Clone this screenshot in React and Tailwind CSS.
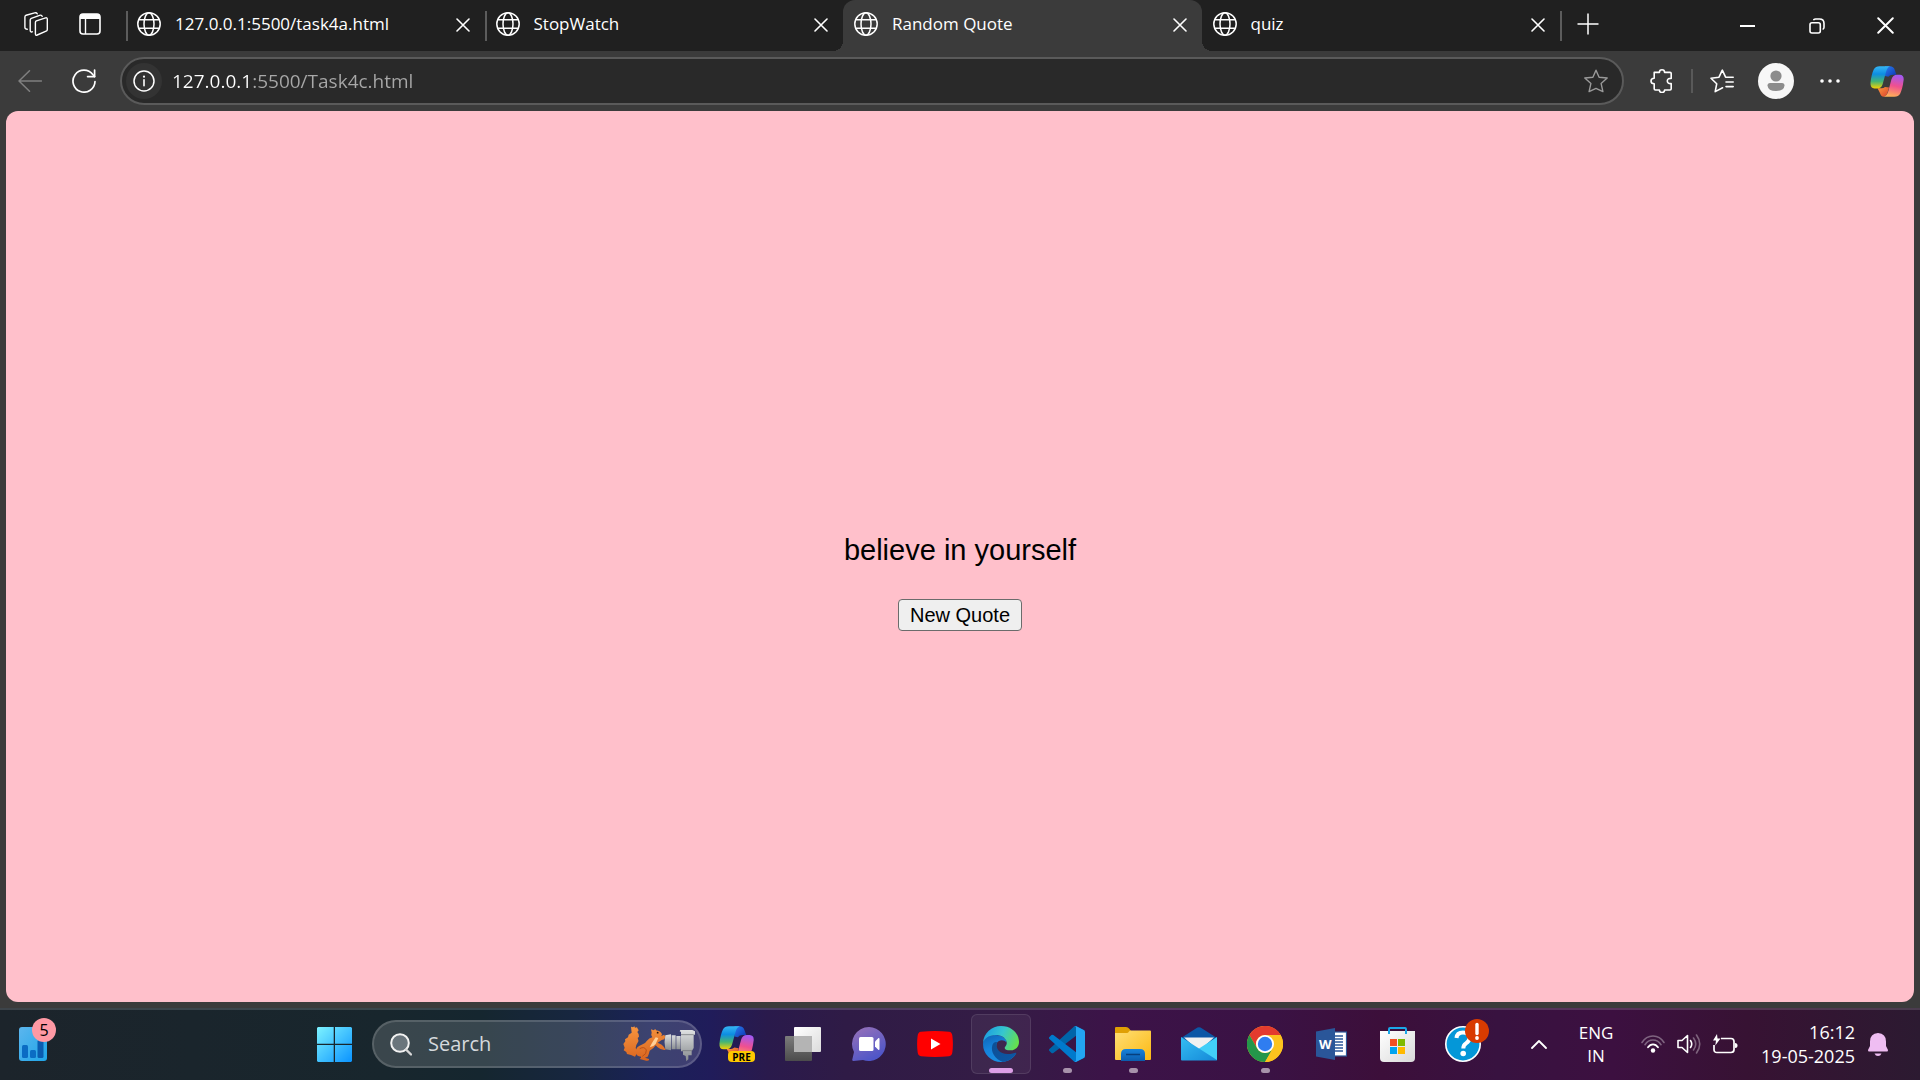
import { useState } from "react";

const QUOTES = ["believe in yourself", "never stop learning", "dream big, start small"];

const TABS = [
  { title: "127.0.0.1:5500/task4a.html", divider: true },
  { title: "StopWatch", divider: true },
  { title: "Random Quote", active: true },
  { title: "quiz" },
];

/* ---------- line icons ---------- */

function Line({ size = 24, w = 1.5, children, className }) {
  return (
    <svg
      width={size}
      height={size}
      viewBox="0 0 24 24"
      fill="none"
      stroke="currentColor"
      strokeWidth={w}
      strokeLinecap="round"
      strokeLinejoin="round"
      aria-hidden="true"
      className={className}
    >
      {children}
    </svg>
  );
}

const WorkspacesIcon = () => (
  <Line w={1.4}>
    <path d="M12.4 8.9 21.6 5.9Q23.3 5.5 23.3 7.2V17.4Q23.3 18.7 22.1 19.2L13.2 23Q11.4 23.7 11.4 21.8V10.4Q11.4 9.3 12.4 8.9Z" />
    <path d="M8.3 19.8Q6.2 20.4 6.2 18.3V8Q6.2 6.8 7.3 6.3L15.6 3.3Q17.7 2.7 18.2 4.4" />
    <path d="M3.3 17.2Q.9 17.2.9 15.4V5Q.9 3.7 2.1 3.2L10.6.9Q12.6.4 13.2 1.8" />
  </Line>
);

const TabActionsIcon = () => (
  <svg width="22" height="22" viewBox="0 0 22 22" fill="none" aria-hidden="true">
    <rect x="1" y="1" width="20" height="20" rx="3" stroke="#fff" strokeWidth="1.6" />
    <path d="M1 6V4a3 3 0 0 1 3-3h14a3 3 0 0 1 3 3v2Z" fill="#fff" />
    <path d="M6.5 6v15" stroke="#fff" strokeWidth="1.4" />
  </svg>
);

const GlobeIcon = () => (
  <Line w={1.5} className="shrink-0">
    <circle cx="12" cy="12" r="11.2" />
    <ellipse cx="12" cy="12" rx="5" ry="11.2" />
    <path d="M1.8 7.8h20.4M1.8 16.2h20.4" />
  </Line>
);

const CrossIcon = ({ size }) => (
  <svg width={size} height={size} viewBox="0 0 14 14" aria-hidden="true">
    <path d="m1 1 12 12M13 1 1 13" stroke="currentColor" strokeWidth="1.6" strokeLinecap="round" />
  </svg>
);

const PlusIcon = () => (
  <svg width="22" height="22" viewBox="0 0 22 22" aria-hidden="true">
    <path d="M11 .5v21M.5 11h21" stroke="currentColor" strokeWidth="1.5" />
  </svg>
);

const RestoreIcon = () => (
  <svg width="16" height="16" viewBox="0 0 16 16" fill="none" stroke="currentColor" strokeWidth="1.6" aria-hidden="true">
    <rect x="1" y="4.7" width="10.3" height="10.3" rx="2" />
    <path d="M4.8 1.6Q5.5 1 6.6 1H10.5Q15 1 15 5.5V9.2Q15 10.3 14.2 11" strokeLinecap="round" />
  </svg>
);

const BackIcon = () => (
  <Line w={1.5}>
    <path d="M23.5 12H1M11.5 1.8 1 12l10.5 10.2" />
  </Line>
);

const RefreshIcon = () => (
  <Line w={1.7}>
    <path d="M23 12.5A11 11 0 1 1 20.8 5.5L22.6 7.6" />
    <path d="M22.6 1V7.6H15.6" />
  </Line>
);

const InfoIcon = () => (
  <svg width="22" height="22" viewBox="0 0 22 22" aria-hidden="true">
    <circle cx="11" cy="11" r="10" fill="none" stroke="#fff" strokeWidth="1.5" />
    <circle cx="11" cy="6.7" r="1.1" fill="#fff" />
    <path d="M11 9.8v6" stroke="#fff" strokeWidth="1.6" strokeLinecap="round" />
  </svg>
);

const StarIcon = () => (
  <Line w={1.4}>
    <path d="M12 1.2 15.1 8.2 23.2 9 17.1 14.4 18.9 22.6 12 19.4 5.1 22.6 6.9 14.4.8 9 8.9 8.2Z" />
  </Line>
);

const PuzzleIcon = () => (
  <Line w={1.6}>
    <path d="M4.2 3.4H9.4C9.4 1.7 10.4.8 12 .8S14.6 1.7 14.6 3.4H20Q21.2 3.4 21.2 4.6V9.4C18.8 9.2 17.3 10.2 17.3 12S18.8 14.8 21.2 14.6V19.8Q21.2 21 20 21H14.6C14.6 22.6 13.6 23.5 12 23.5S9.4 22.6 9.4 21H5.4Q4.2 21 4.2 19.8V14.8C2 14.8 1 13.6 1 12S2 9.3 4.2 9.3Z" />
  </Line>
);

const FavoritesIcon = () => (
  <Line w={1.6}>
    <path d="M23.2 8.2H15.6L12.3 1.2 9 8.2 1 9.2 6.7 14.8 5.2 22.6 12.6 18.8" />
    <path d="M16 13h7.2M16 17.6h7.2" />
  </Line>
);

/* ---------- colour icons ---------- */

function CopilotIcon({ id, width, height }) {
  return (
    <svg width={width} height={height} viewBox="0 0 100 92" aria-hidden="true">
      <defs>
        <linearGradient id={id + "l"} x1="0" y1="0" x2="0" y2="1">
          <stop offset="0" stopColor="#35b6f4" />
          <stop offset=".35" stopColor="#0d8de2" />
          <stop offset=".68" stopColor="#45b573" />
          <stop offset="1" stopColor="#f8d200" />
        </linearGradient>
        <linearGradient id={id + "r"} x1=".6" y1="0" x2=".4" y2="1">
          <stop offset="0" stopColor="#a259f2" />
          <stop offset=".5" stopColor="#f0508f" />
          <stop offset="1" stopColor="#ffb057" />
        </linearGradient>
        <linearGradient id={id + "t"} x1="0" y1="0" x2="1" y2="1">
          <stop offset="0" stopColor="#2a7df0" />
          <stop offset="1" stopColor="#0d35b0" />
        </linearGradient>
        <linearGradient id={id + "b"} x1="0" y1="0" x2="1" y2="1">
          <stop offset="0" stopColor="#ff9a3c" />
          <stop offset="1" stopColor="#d8402e" />
        </linearGradient>
      </defs>
      <path d="M44 1H58Q70 1 73 12L78 26H68Q58 26 54 32L44 30Z" fill={`url(#${id}t)`} />
      <path d="M22 66H34Q40 66 44 62L56 64 52 78Q48 91 40 91 32 91 29 80Z" fill={`url(#${id}b)`} />
      <path d="M28 1H60Q51 3 47 18L37 54Q33 67 20 67H13Q0 67 1 50 4 24 11 10 16 1 28 1Z" fill={`url(#${id}l)`} />
      <path d="M80 26H88Q102 27 99 44 96 68 89 82 84 91 72 91H40Q50 89 54 74L63 40Q67 26 80 26Z" fill={`url(#${id}r)`} />
    </svg>
  );
}

const AvatarIcon = () => (
  <svg width="36" height="36" viewBox="0 0 36 36" aria-hidden="true">
    <circle cx="18" cy="18" r="18" fill="#f7f7f7" />
    <circle cx="18" cy="13" r="5.6" fill="#8c8c8c" />
    <path d="M12 20H24Q26.5 20 26.5 22.5 26 28 18 28T9.5 22.5Q9.5 20 12 20Z" fill="#8c8c8c" />
  </svg>
);

const WidgetsIcon = () => (
  <svg width="28" height="34" viewBox="0 0 28 34" aria-hidden="true">
    <defs>
      <linearGradient id="wg" x1="0" y1="0" x2="1" y2="1">
        <stop offset="0" stopColor="#5cb6ee" />
        <stop offset="1" stopColor="#1fa5e8" />
      </linearGradient>
    </defs>
    <rect width="28" height="34" rx="3" fill="url(#wg)" />
    <rect x="3" y="18" width="6" height="13" rx="1.5" fill="#0b6cc4" />
    <rect x="11" y="23" width="6" height="8" rx="1.5" fill="#0b6cc4" />
    <rect x="18.500" y="13" width="6" height="18" rx="1.5" fill="#0a5cb0" />
  </svg>
);

const StartIcon = () => (
  <svg width="35" height="35" viewBox="0 0 35 35" aria-hidden="true">
    <defs>
      <linearGradient id="st" gradientUnits="userSpaceOnUse" x1="0" y1="0" x2="35" y2="35">
        <stop offset="0" stopColor="#7df3ff" />
        <stop offset="1" stopColor="#0a93ff" />
      </linearGradient>
    </defs>
    <path d="M1 0H16.700V16.700H0V1ZM18 0H34L35 1V16.700H18ZM0 18H16.700V35H1L0 34ZM18 18H35V34L34 35H18Z" fill="url(#st)" />
  </svg>
);

const SearchIcon = () => (
  <svg width="22" height="23" viewBox="0 0 22 23" fill="none" aria-hidden="true">
    <circle cx="10" cy="10" r="8.800" fill="#6a757c" stroke="#f2f2f2" strokeWidth="2" />
    <path d="m16 16.500 5 5" stroke="#d8d8d8" strokeWidth="2.400" strokeLinecap="round" />
  </svg>
);

const SquirrelIcon = () => (
  <svg width="73" height="36" viewBox="0 0 219 108" aria-hidden="true">
    <defs>
      <linearGradient id="sq" gradientUnits="userSpaceOnUse" x1="40" y1="0" x2="50" y2="104">
        <stop offset="0" stopColor="#f7953f" />
        <stop offset="1" stopColor="#d9641f" />
      </linearGradient>
      <linearGradient id="cam" x1="0" y1="0" x2="0" y2="1">
        <stop offset="0" stopColor="#dfe1e2" />
        <stop offset="1" stopColor="#85898c" />
      </linearGradient>
    </defs>
    <path d="M24 2 30 4 34 1 36 5 42 4Q44 9 47 13L43 18Q50 26 48 32L44 36Q49 44 43 52 38 58 38 66L42 76Q42 86 36 92 24 86 12 84L10 78 2 73 5 65 1 54 7 46 6 40 15 34 17 26 26 20Z" fill="url(#sq)" />
    <path d="M84 10 92 13 97 9 99 13Q113 15 117 25 117 31 108 33L124 26Q129 32 124 40L116 42 104 50 116 56Q126 64 128 72 116 74 104 64L98 58Q92 68 80 74 78 84 74 92L66 95 78 99Q80 105 70 104L50 99Q56 94 54 92 40 92 38 78 38 62 56 56 66 54 72 44 78 36 88 34 82 28 86 20Z" fill="url(#sq)" />
    <path d="M98 34 106 36 98 54Q90 64 80 64 88 48 98 34Z" fill="#ffcf98" />
    <path d="M50 68Q64 60 70 72 72 84 58 91" fill="none" stroke="#b54a12" strokeWidth="2.500" />
    <circle cx="104" cy="20" r="2.800" fill="#2b1205" />
    <path d="M127 28 144 25V73L127 70Q122 50 127 28ZM146 28H158V70H146ZM160 30H173V70H160Z" fill="url(#cam)" />
    <path d="M174 18 170 16 172 12H208L216 16V26H212V66L206 76V88H196V100L190 106 188 90 180 86V76H174Z" fill="url(#cam)" />
    <path d="M174 26H212M178 74H208" stroke="#686c6f" strokeWidth="2" />
  </svg>
);

const CopilotPreIcon = () => (
  <span className="relative block h-9 w-9">
    <CopilotIcon id="cp" width={35} height={32} />
    <span className="absolute right-0 bottom-0 flex h-[11px] w-[27px] items-center justify-center rounded-sm bg-[#ffc800] text-[10px] leading-none font-bold text-black">
      PRE
    </span>
  </span>
);

const TaskViewIcon = () => (
  <svg width="36" height="34" viewBox="0 0 36 34" aria-hidden="true">
    <defs>
      <linearGradient id="tv" x1="0" y1="0" x2="0" y2="1">
        <stop offset="0" stopColor="#7c7c7c" />
        <stop offset="1" stopColor="#4c4c4c" />
      </linearGradient>
      <linearGradient id="tw" x1="0" y1="0" x2="1" y2="1">
        <stop offset="0" stopColor="#ffffff" />
        <stop offset="1" stopColor="#dcdcdc" />
      </linearGradient>
    </defs>
    <rect y="9" width="27" height="25" rx="1" fill="url(#tv)" />
    <rect x="9" width="27" height="25" rx="1" fill="url(#tw)" />
    <rect x="9" y="9" width="18" height="16" fill="#b4b4b4" />
  </svg>
);

const ChatIcon = () => (
  <svg width="34" height="34" viewBox="0 0 34 34" aria-hidden="true">
    <defs>
      <linearGradient id="ch" x1="0" y1="0" x2=".5" y2="1">
        <stop offset="0" stopColor="#9a72b8" />
        <stop offset="1" stopColor="#4f56c8" />
      </linearGradient>
    </defs>
    <path d="M17 0A17 17 0 1 1 11 33L1.500 34Q0 34 .3 32.500L2 25A17 17 0 0 1 17 0Z" fill="url(#ch)" />
    <rect x="7" y="10" width="14.500" height="14" rx="1.500" fill="#fff" />
    <path d="M23 14.500 26.500 11Q27.500 10.700 27.500 12V22Q27.500 23.300 26.500 23L23 19.500Z" fill="#fff" />
  </svg>
);

const YoutubeIcon = () => (
  <svg width="36" height="26" viewBox="0 0 36 26" aria-hidden="true">
    <path d="M4 .8Q18-.6 32 .8 35 1 35.400 5 36.400 13 35.400 21 35 25 32 25.200 18 26.600 4 25.200 1 25 .6 21-.4 13 .6 5 1 1 4 .8Z" fill="#f00" />
    <path d="M14 7.500 23.500 13 14 18.500Z" fill="#fff" />
  </svg>
);

const EdgeIcon = () => (
  <svg width="36" height="36" viewBox="0 0 108 108" aria-hidden="true">
    <defs>
      <linearGradient id="e1" x1="0" y1=".3" x2="1" y2=".6">
        <stop offset="0" stopColor="#1b9de2" />
        <stop offset=".5" stopColor="#36c6cf" />
        <stop offset="1" stopColor="#66e04b" />
      </linearGradient>
      <linearGradient id="e2" x1="0" y1="0" x2=".5" y2="1">
        <stop offset="0" stopColor="#0f62b4" />
        <stop offset=".5" stopColor="#1583dc" />
        <stop offset="1" stopColor="#1a8fe2" />
      </linearGradient>
      <linearGradient id="e3" x1="0" y1="0" x2="1" y2="1">
        <stop offset="0" stopColor="#0d4f96" />
        <stop offset="1" stopColor="#0c58a6" />
      </linearGradient>
    </defs>
    <path d="M0 54C0 36 18 26 38 27 58 28 72 38 70 50 64 40 44 40 40 56 36 76 54 96 76 94 90 92 96 86 99 82 92 98 74 108 54 108A54 54 0 0 1 0 54Z" fill="url(#e2)" />
    <path d="M42 49C36 68 50 84 74 84 86 84 94 80 98 80 101 80 100 82 98 85 88 102 66 108 60 108 36 100 22 78 28 58 31 49 38 47 42 49Z" fill="url(#e3)" />
    <path d="M0 50C2 22 26 0 54 0 88 0 108 24 108 48 108 64 96 73 82 73 68 73 63 68 66 63 70 58 72 54 71 48 68 34 54 27 38 27 18 27 4 38 0 50Z" fill="url(#e1)" />
  </svg>
);

const VsCodeIcon = () => (
  <svg width="36" height="36" viewBox="0 0 100 100" aria-hidden="true">
    <path d="M96.460 10.800 75.860.880A6.230 6.230 0 0 0 68.750 2.080L1.300 63.580a4.170 4.170 0 0 0 0 6.170L6.810 74.750a4.170 4.170 0 0 0 5.320.240L93.360 13.370A4.140 4.140 0 0 1 100 16.670V16.430A6.250 6.250 0 0 0 96.460 10.800Z" fill="#0065a9" />
    <path d="M96.460 89.200 75.860 99.120A6.230 6.230 0 0 1 68.750 97.920L1.300 36.420a4.170 4.170 0 0 1 0-6.170L6.810 25.250A4.170 4.170 0 0 1 12.130 25L93.360 86.630A4.140 4.140 0 0 0 100 83.330V83.570A6.250 6.250 0 0 1 96.460 89.200Z" fill="#007acc" />
    <path d="M75.860 99.130A6.230 6.230 0 0 1 68.750 97.920C71.060 100.220 75 98.590 75 95.330V4.670C75 1.410 71.060-.220 68.750 2.080A6.230 6.230 0 0 1 75.860.870L96.460 10.780A6.250 6.250 0 0 1 100 16.410V83.590A6.250 6.250 0 0 1 96.460 89.220Z" fill="#23a5f2" />
  </svg>
);

const FolderIcon = () => (
  <svg width="36" height="34" viewBox="0 0 36 34" aria-hidden="true">
    <defs>
      <linearGradient id="fo" x1="0" y1="0" x2="1" y2="1">
        <stop offset="0" stopColor="#ffdf76" />
        <stop offset="1" stopColor="#fcb913" />
      </linearGradient>
      <linearGradient id="fb" x1="0" y1="0" x2="0" y2="1">
        <stop offset="0" stopColor="#1683dc" />
        <stop offset="1" stopColor="#0c5cac" />
      </linearGradient>
    </defs>
    <path d="M0 1Q0 0 1 0H11Q13 0 14.500 2L16 4V8H0Z" fill="#e0a004" />
    <path d="M0 6H12Q13 6 14 4.500T16 3.500H35Q36 3.500 36 4.500V32Q36 33 35 33H1Q0 33 0 32Z" fill="url(#fo)" />
    <path d="M6 34V27Q6 22 11 22H25Q30 22 30 27V34Z" fill="url(#fb)" />
    <path d="M11 27.500H25" stroke="#073f7c" strokeWidth="1.500" />
  </svg>
);

const MailIcon = () => (
  <svg width="36" height="34" viewBox="0 0 36 34" aria-hidden="true">
    <defs>
      <linearGradient id="ma" x1="0" y1="0" x2="1" y2="1">
        <stop offset="0" stopColor="#35bdf2" />
        <stop offset="1" stopColor="#1488d8" />
      </linearGradient>
    </defs>
    <path d="M0 11 16.500.6Q18-.2 19.500.6L36 11 18 22Z" fill="#0c57a6" />
    <path d="M3 10.500H33L18 24Z" fill="#f1f1f1" />
    <path d="M18 21.500 36 10V33H0Z" fill="#42cff8" />
    <path d="M0 10 36 33Q36 33.500 35 33.500H1Q0 33.500 0 32.500Z" fill="url(#ma)" />
  </svg>
);

const ChromeIcon = () => (
  <svg width="36" height="36" viewBox="0 0 48 48" aria-hidden="true">
    <circle cx="24" cy="24" r="24" fill="#fcc31e" />
    <path d="M3.200 12A24 24 0 0 1 44.800 12H24A12 12 0 0 0 13.600 30Z" fill="#e33b2e" />
    <path d="M3.200 12 13.600 30A12 12 0 0 0 34.400 30L24 48A24 24 0 0 1 3.200 12Z" fill="#24964a" />
    <path d="M24 12H44.800A24 24 0 0 1 24 48L34.400 30Z" fill="#fcc31e" />
    <circle cx="24" cy="24" r="12" fill="#fff" />
    <circle cx="24" cy="24" r="9.600" fill="#2f7df0" />
  </svg>
);

const WordIcon = () => (
  <svg width="31" height="32" viewBox="0 0 31 32" aria-hidden="true">
    <rect x="17" y="4" width="13.500" height="24" fill="#fff" stroke="#2b5797" strokeWidth="1.200" />
    <path d="M19 8H27M19 11H27M19 14H27M19 17H27M19 20H27M19 23H27" stroke="#2b579a" strokeWidth="1.400" />
    <path d="M0 3.500 19 0V32L0 28.500Z" fill="#2a5699" />
    <text x="9.300" y="20.500" textAnchor="middle" fontSize="13" fontWeight="700" fill="#fff" className="font-['Open_Sans',sans-serif]">
      W
    </text>
  </svg>
);

const StoreIcon = () => (
  <svg width="35" height="35" viewBox="0 0 35 35" aria-hidden="true">
    <defs>
      <linearGradient id="so" x1="0" y1="0" x2="1" y2="1">
        <stop offset="0" stopColor="#ffffff" />
        <stop offset="1" stopColor="#d9d9d9" />
      </linearGradient>
    </defs>
    <path d="M0 4H35V31Q35 35 31 35H4Q0 35 0 31Z" fill="url(#so)" />
    <path d="M9 7V2Q9 1 10 1H25Q26 1 26 2V7" fill="none" stroke="#1ba7e8" strokeWidth="2" />
    <path d="M10 12h7v7h-7z" fill="#f25022" />
    <path d="M18 12h7v7h-7z" fill="#7fba00" />
    <path d="M10 20h7v7h-7z" fill="#00a4ef" />
    <path d="M18 20h7v7h-7z" fill="#ffb900" />
  </svg>
);

const HelpIcon = () => (
  <span className="relative block h-9 w-9">
    <svg width="36" height="36" viewBox="0 0 36 36" aria-hidden="true">
      <circle cx="18" cy="18" r="17.200" fill="#0497d8" stroke="#fff" strokeWidth="1.600" />
      <path d="M11.500 12Q12 6.500 18 6.500T24.500 12Q24.500 15 21 17.300 18.300 19 18.300 22.500" fill="none" stroke="#fff" strokeWidth="4" />
      <circle cx="18.200" cy="27.500" r="2.800" fill="#fff" />
    </svg>
    <svg width="24" height="24" viewBox="0 0 24 24" aria-hidden="true" className="absolute -top-[7px] -right-2">
      <circle cx="12" cy="12" r="12" fill="#d83b01" />
      <path d="M12 5.500v9" stroke="#fff" strokeWidth="3.400" strokeLinecap="round" />
      <circle cx="12" cy="19" r="1.900" fill="#fff" />
    </svg>
  </span>
);

const WifiIcon = () => (
  <svg width="24" height="18" viewBox="0 0 24 18" fill="none" strokeWidth="1.600" strokeLinecap="round" aria-hidden="true">
    <path d="M1 7.500Q5 1 12 1T23 7.500M4 9.700Q7 5 12 5T20 9.700" stroke="#fff" opacity=".35" />
    <path d="M7 12.300Q9 9.300 12 9.300T17 12.300" stroke="#fff" strokeWidth="1.800" />
    <circle cx="12" cy="15.500" r="2.200" fill="#fff" />
  </svg>
);

const SpeakerIcon = () => (
  <svg width="24" height="20" viewBox="0 0 24 20" fill="none" stroke="#fff" strokeWidth="1.600" strokeLinecap="round" strokeLinejoin="round" aria-hidden="true">
    <path d="M1 6.500H5L10.500 1.500V18.500L5 13.500H1Z" />
    <path d="M13.500 6.500Q16 10 13.500 13.500" />
    <path d="M16.500 4Q21 10 16.500 16M19.500 1Q26 10 19.500 19" opacity=".35" />
  </svg>
);

const BatteryIcon = () => (
  <svg width="25" height="20" viewBox="0 0 25 20" fill="none" aria-hidden="true">
    <path d="M8 4.500H18Q21 4.500 21 7.500V15.500Q21 18.500 18 18.500H4Q1 18.500 1 15.500V11" stroke="#fff" strokeWidth="1.700" />
    <path d="M22 9Q24.500 9 24.500 11.500T22 14Z" fill="#fff" />
    <path d="M4 0 0 6.500H3L2.300 11.500 7.500 4.500H4.500Z" fill="#fff" />
  </svg>
);

const BellIcon = () => (
  <svg width="20" height="23" viewBox="0 0 20 23" fill="#efbdf2" aria-hidden="true">
    <path d="M10 0Q18 .5 18 8.500V13L20 17Q20 18.500 19 18.500H1Q0 18.500 0 17L2 13V8.500Q2 .5 10 0ZM6.500 20.500H13.500Q12.500 23 10 23T6.500 20.500Z" />
  </svg>
);

/* ---------- browser ---------- */

function Tab({ title, active, divider }) {
  return (
    <div className={`relative flex h-full min-w-0 flex-1 items-center ${active ? "rounded-t-xl bg-[#3b3b3b]" : ""}`}>
      {active && (
        <>
          <span className="absolute bottom-0 -left-2.5 size-2.5 bg-[radial-gradient(circle_at_0_0,transparent_10px,#3b3b3b_10px)]" />
          <span className="absolute -right-2.5 bottom-0 size-2.5 bg-[radial-gradient(circle_at_100%_0,transparent_10px,#3b3b3b_10px)]" />
        </>
      )}
      <span className={`h-[30px] w-0.5 shrink-0 ${divider ? "bg-[#5c5c5c]" : ""}`} />
      <button type="button" role="tab" aria-selected={!!active} className="ml-[9px] flex min-w-0 flex-1 items-center gap-3.5 pb-1 text-left">
        <GlobeIcon />
        <span className="truncate text-[17px] leading-6">{title}</span>
      </button>
      <button type="button" aria-label={`Close ${title}`} className="mr-[15px] flex h-8 shrink-0 items-center pb-0.5 pl-2">
        <CrossIcon size={14} />
      </button>
    </div>
  );
}

function TabStrip() {
  return (
    <div className="flex h-[51px] shrink-0 bg-[#202020] text-white">
      <div className="flex w-[126px] shrink-0 items-center gap-[31px] pl-6 pb-1">
        <button type="button" aria-label="Workspaces">
          <WorkspacesIcon />
        </button>
        <button type="button" aria-label="Tab actions menu">
          <TabActionsIcon />
        </button>
      </div>
      <div role="tablist" className="flex min-w-0 shrink basis-[1434px] items-center">
        {TABS.map((t) => (
          <Tab key={t.title} {...t} />
        ))}
      </div>
      <span className="mt-[11px] h-[30px] w-0.5 shrink-0 bg-[#5c5c5c]" />
      <button type="button" aria-label="New tab" className="ml-1 flex w-11 shrink-0 items-center justify-center pb-1">
        <PlusIcon />
      </button>
      <div className="ml-auto flex shrink-0">
        <button type="button" aria-label="Minimize" className="flex w-[69px] items-center justify-center">
          <span className="h-0.5 w-[15px] bg-white" />
        </button>
        <button type="button" aria-label="Restore" className="flex w-[69px] items-center justify-center">
          <RestoreIcon />
        </button>
        <button type="button" aria-label="Close window" className="flex w-[69px] items-center justify-center">
          <CrossIcon size={17} />
        </button>
      </div>
    </div>
  );
}

const TOOL = "flex h-9 w-9 shrink-0 items-center justify-center";

function Toolbar() {
  return (
    <div className="flex h-[60px] shrink-0 items-center gap-[18px] pr-[15px] pl-3 text-white">
      <button type="button" aria-label="Back" className={`${TOOL} text-[#808080]`}>
        <BackIcon />
      </button>
      <button type="button" aria-label="Refresh" className={TOOL}>
        <RefreshIcon />
      </button>
      <div className="flex h-12 min-w-0 flex-1 items-center rounded-full border-2 border-[#5a5a5a] bg-[#292929] pr-2 pl-1">
        <button type="button" aria-label="View site information" className={`${TOOL} rounded-full bg-[#333333]`}>
          <InfoIcon />
        </button>
        <input
          type="text"
          aria-label="Address"
          defaultValue="127.0.0.1:5500/Task4c.html"
          className="ml-2.5 h-full min-w-0 flex-1 bg-[linear-gradient(90deg,#ffffff_80px,#a8a8a8_80px)] bg-clip-text text-[19px] text-transparent caret-white outline-none"
        />
        <button type="button" aria-label="Add to favorites" className={`${TOOL} text-[#9a9a9a]`}>
          <StarIcon />
        </button>
      </div>
      <div className="ml-0.5 flex shrink-0 items-center gap-[11px]">
        <button type="button" aria-label="Extensions" className={TOOL}>
          <PuzzleIcon />
        </button>
        <span className="h-6 w-0.5 bg-[#595959]" />
        <button type="button" aria-label="Favorites" className={TOOL}>
          <FavoritesIcon />
        </button>
      </div>
      <button type="button" aria-label="Profile" className={TOOL}>
        <AvatarIcon />
      </button>
      <button type="button" aria-label="Settings and more" className={TOOL}>
        <svg width="20" height="4" viewBox="0 0 20 4" fill="currentColor" aria-hidden="true">
          <circle cx="2" cy="2" r="1.800" />
          <circle cx="10" cy="2" r="1.800" />
          <circle cx="18" cy="2" r="1.800" />
        </svg>
      </button>
      <button type="button" aria-label="Copilot" className={`${TOOL} ml-[3px]`}>
        <CopilotIcon id="cb" width={34} height={31} />
      </button>
    </div>
  );
}

/* ---------- taskbar ---------- */

const APPS = [
  { name: "Copilot (preview)", Icon: CopilotPreIcon },
  { name: "Task View", Icon: TaskViewIcon },
  { name: "Chat", Icon: ChatIcon },
  { name: "YouTube", Icon: YoutubeIcon },
  { name: "Microsoft Edge", Icon: EdgeIcon, active: true },
  { name: "Visual Studio Code", Icon: VsCodeIcon, open: true },
  { name: "File Explorer", Icon: FolderIcon, open: true },
  { name: "Mail", Icon: MailIcon },
  { name: "Google Chrome", Icon: ChromeIcon, open: true },
  { name: "Word", Icon: WordIcon },
  { name: "Microsoft Store", Icon: StoreIcon },
  { name: "Get Help", Icon: HelpIcon },
];

function Taskbar() {
  return (
    <footer className="flex h-[72px] shrink-0 items-center border-t-2 border-white/15 bg-[linear-gradient(90deg,#1c242b_0%,#18262d_20%,#15262f_25%,#172640_30%,#1a2158_34%,#201c5a_37%,#2a1a4c_40%,#2f1b46_44%,#341c45_52%,#3c1348_58%,#3a1244_66%,#3c0f3a_72%,#381240_78%,#3c1040_84%,#371233_91%,#2c1a31_100%)] bg-origin-border pb-0.5 text-white">
      <div className="flex flex-1 items-center">
        <button type="button" aria-label="Widgets, 5 notifications" className="relative ml-[19px]">
          <WidgetsIcon />
          <span className="absolute -top-[9px] -right-[9px] flex size-6 items-center justify-center rounded-full bg-[#ff99a4] text-base leading-none text-black">
            5
          </span>
        </button>
      </div>
      <div className="flex shrink-0 items-center">
        <button type="button" aria-label="Start" className="mr-2 flex h-[60px] w-[60px] items-center justify-center">
          <StartIcon />
        </button>
        <label className="mr-[5px] flex h-12 w-[330px] items-center rounded-full border-2 border-white/15 bg-white/15 pr-1 pl-4">
          <SearchIcon />
          <input
            type="text"
            aria-label="Search"
            placeholder="Search"
            className="ml-4 w-full min-w-0 flex-1 bg-transparent text-xl outline-none placeholder:text-[#d5d9dc]"
          />
          <SquirrelIcon />
        </label>
        <div className="flex gap-1.5">
          {APPS.map(({ name, Icon, active, open }) => (
            <button
              key={name}
              type="button"
              aria-label={name}
              className={`relative flex h-[60px] w-[60px] items-center justify-center rounded-md border ${active ? "border-white/10 bg-white/5" : "border-transparent"}`}
            >
              <Icon />
              {active && <span className="absolute bottom-0 h-[5px] w-6 rounded-full bg-[#dd9fe6]" />}
              {open && <span className="absolute bottom-0 h-[5px] w-[9px] rounded-full bg-[#a792ab]" />}
            </button>
          ))}
        </div>
      </div>
      <div className="flex shrink-0 items-center">
        <button type="button" aria-label="Show hidden icons" className="ml-7 flex h-12 w-9 items-center justify-center">
          <svg width="16" height="9" viewBox="0 0 16 9" fill="none" aria-hidden="true">
            <path d="M1 8 8 1l7 7" stroke="#fff" strokeWidth="1.800" strokeLinecap="round" strokeLinejoin="round" />
          </svg>
        </button>
        <button type="button" className="ml-3.5 w-[50px] text-center text-[17px] leading-[23px]">
          ENG
          <br />
          IN
        </button>
        <button type="button" aria-label="Network, volume and battery" className="ml-5 flex items-center gap-3">
          <WifiIcon />
          <SpeakerIcon />
          <BatteryIcon />
        </button>
        <button type="button" className="w-[117px] text-right text-lg leading-6">
          16:12
          <br />
          19-05-2025
        </button>
        <button type="button" aria-label="Notifications" className="mr-8 ml-[13px]">
          <BellIcon />
        </button>
      </div>
    </footer>
  );
}

export default function App() {
  const [index, setIndex] = useState(0);
  return (
    <div className="flex min-h-screen flex-col bg-[#3b3b3b] font-['Open_Sans','Noto_Sans',sans-serif]">
      <TabStrip />
      <Toolbar />
      <main className="mx-1.5 mb-1.5 flex flex-1 flex-col items-center justify-center rounded-xl bg-[#ffc0cb] pt-[50px] font-['Liberation_Sans',Arial,sans-serif] text-black">
        <p className="text-[29px] leading-[34px]">{QUOTES[index]}</p>
        <button
          type="button"
          onClick={() => setIndex((index + 1) % QUOTES.length)}
          className="mt-8 h-8 rounded-sm border border-[#6b6b6b] bg-[#efefef] px-[11px] text-xl leading-none"
        >
          New Quote
        </button>
      </main>
      <Taskbar />
    </div>
  );
}
